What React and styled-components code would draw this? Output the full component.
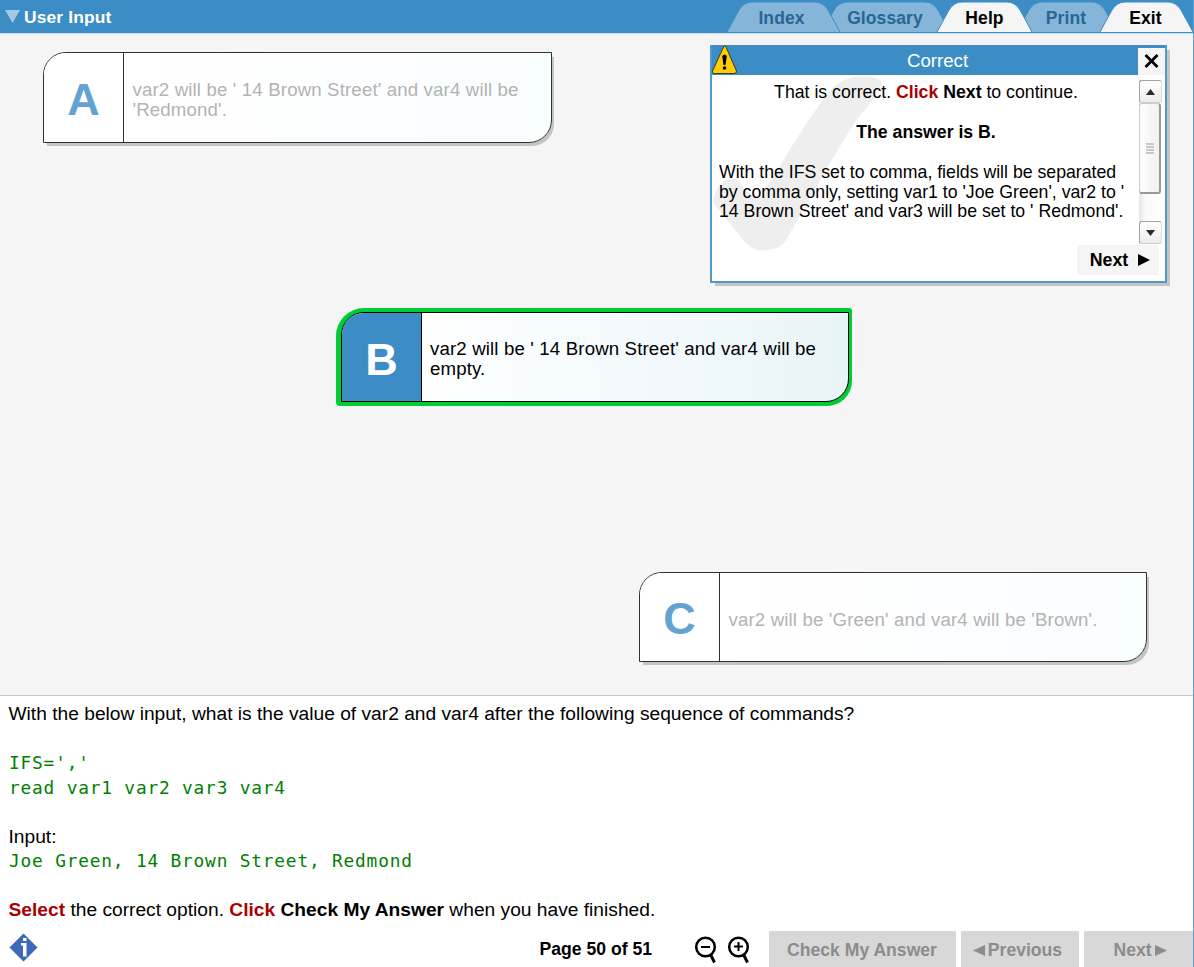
import React from "react";
import styled, { createGlobalStyle } from "styled-components";

const Global = createGlobalStyle`
  body { margin: 0; background: #fff; }
  *, *::before, *::after { box-sizing: border-box; }
  button { font: inherit; border: 0; padding: 0; cursor: pointer; }
`;

const App = styled.div`
  position: relative;
  width: 1194px;
  height: 967px;
  overflow: hidden;
  display: flex;
  flex-direction: column;
  border-right: 1px solid #5ba0d0;
  font-family: "Liberation Sans", Arial, sans-serif;
  font-size: 18.67px;
  color: #000;
  background: #fff;
`;

const Header = styled.header`
  flex: none;
  height: 34px;
  display: flex;
  align-items: flex-start;
  background: #3c8dc5;
  border-bottom: 1px solid #c5dff0;
`;

const Title = styled.h1`
  margin: 0 auto 0 0;
  padding: 0 0 0 5px;
  height: 34px;
  display: flex;
  align-items: center;
  gap: 4px;
  color: #fff;
  font-size: 17.4px;
  font-weight: bold;
  letter-spacing: 0.15px;

  svg { margin-bottom: 2px; }
`;

const Tabs = styled.nav`
  display: flex;
  padding-top: 2px;
`;

const TabButton = styled.button`
  position: relative;
  flex: none;
  width: ${(p) => p.$width}px;
  height: 30px;
  margin-left: ${(p) => p.$overlap}px;
  padding-top: 3px;
  z-index: ${(p) => p.$level};
  background: none;
  font-size: 17.5px;
  font-weight: bold;
  letter-spacing: 0.1px;
  color: ${(p) => (p.$active ? "#000" : "#2a6593")};

  svg { position: absolute; left: 0; top: 0; overflow: visible; }
  span { position: relative; left: ${(p) => p.$shift || 0}px; }
`;

const Board = styled.main`
  flex: none;
  height: 662px;
  padding-top: 18px;
  display: flex;
  flex-direction: column;
  align-items: flex-start;
  background: #f5f5f5;
  border-bottom: 1px solid #c6c6c6;
`;

const OptionFrame = styled.div`
  margin: ${(p) => p.$margin};
  padding: ${(p) => (p.$selected ? "4px 3px 4px 5px" : "0")};
  background: ${(p) => (p.$selected ? "#00cc33" : "transparent")};
  border-radius: ${(p) => (p.$selected ? "28px 3px 25px 4px" : "0")};
`;

const OptionCard = styled.div`
  width: ${(p) => p.$width || 508}px;
  height: ${(p) => p.$height || 90}px;
  display: flex;
  overflow: hidden;
  border: 1.5px solid ${(p) => (p.$selected ? "#000" : "#303030")};
  border-radius: 23px 0 23px 0;
  background: ${(p) =>
    p.$selected
      ? "linear-gradient(90deg, #fff 16%, #f7fcfe 40%, #e9f4f8)"
      : "linear-gradient(90deg, #fff 16%, #fdfeff 60%, #f8fdfe)"};
  box-shadow: ${(p) => (p.$selected ? "none" : "3px 4px 0 -1px #c4c4c4")};
`;

const Letter = styled.div`
  flex: none;
  width: 80px;
  display: flex;
  align-items: center;
  justify-content: center;
  padding-top: ${(p) => (p.$selected ? 5 : 4)}px;
  border-right: 1.5px solid ${(p) => (p.$selected ? "#000" : "#303030")};
  background: ${(p) => (p.$selected ? "#3c8dc5" : "#fff")};
  color: ${(p) => (p.$selected ? "#fff" : "#62a3d1")};
  font-size: 45px;
  font-weight: bold;
`;

const OptionText = styled.p`
  margin: 0;
  padding: ${(p) => (p.$selected ? "4px 10px 0 8px" : "5px 10px 0 8.5px")};
  align-self: center;
  line-height: 20px;
  letter-spacing: 0.14px;
  white-space: pre-line;
  color: ${(p) => (p.$selected ? "#000" : "#b3b3b3")};
`;

const Popup = styled.section`
  position: absolute;
  z-index: 5;
  left: 710px;
  top: 45px;
  width: 457px;
  height: 238px;
  display: flex;
  flex-direction: column;
  border: 2px solid #4f9acd;
  border-top: 0;
  background: #fff;
  box-shadow: 4px 4px 0 -1px #c4c4c4;
`;

const PopupHeader = styled.div`
  flex: none;
  height: 30px;
  display: flex;
  align-items: center;
  justify-content: space-between;
  padding-top: 2px;
  background: #3c8dc5;
  color: #fff;
`;

const WarningIcon = styled.svg`
  margin: -4px 0 0 0;
`;

const CloseButton = styled.button`
  width: 27px;
  height: 27px;
  display: grid;
  place-items: center;
  background: #f5f5f5;
`;

const PopupBody = styled.div`
  display: flex;
  height: 170px;
  padding: 5px 3px 0 7px;
`;

const Feedback = styled.div`
  position: relative;
  flex: 1;
  min-width: 0;
  padding: 3px 6px 0 0;
  font-size: 17.7px;
  line-height: 19.9px;
  white-space: pre;
`;

const Centered = styled.p`
  margin: 0 0 19.9px;
  text-align: center;
`;

const Paragraph = styled.p`
  margin: 0;
`;

const Watermark = styled.svg`
  position: absolute;
  left: 0;
  top: 30px;
  z-index: -1;
`;

const Scrollbar = styled.div`
  flex: none;
  width: 23px;
  height: 164px;
  display: flex;
  flex-direction: column;
  background: linear-gradient(90deg, #e6e6e6, #fafafa 30%, #fff);
`;

const ScrollArrow = styled.button`
  height: 23px;
  display: grid;
  place-items: center;
  border: 1.5px solid #a2a2a2;
  border-right-color: #ddd;
  border-bottom-color: #ccc;
  border-radius: 3px;
  background: linear-gradient(#fff, #ececec);
`;

const Thumb = styled.div`
  height: 91px;
  margin: 0 1px 27px 0;
  padding-top: 2px;
  display: grid;
  place-items: center;
  border: 1px solid #ccc;
  border-right: 2px solid #999;
  border-bottom: 2px solid #999;
  border-radius: 3px;
  background: linear-gradient(90deg, #fff, #f0f0f0);
`;

const NextButton = styled.button`
  align-self: flex-end;
  width: 82px;
  height: 30px;
  margin: 0 6px 0 0;
  padding-left: 4px;
  display: flex;
  align-items: center;
  justify-content: center;
  gap: 10px;
  background: #f5f5f5;
  font-size: 17.8px;
  font-weight: bold;
`;

const Red = styled.b`
  color: #a80000;
`;

const Question = styled.section`
  flex: none;
  height: 234px;
  padding: 6px 8.5px 0;
  font-size: 19.2px;
  line-height: 24.5px;
  white-space: pre;
`;

const Line = styled.p`
  margin: 0 0 ${(p) => (p.$gap ? "24.5px" : "0")};
`;

const Code = styled.code`
  display: block;
  margin-bottom: 24.5px;
  padding-left: 0.5px;
  font-family: "DejaVu Sans Mono", monospace;
  font-size: 17.8px;
  line-height: 24.5px;
  letter-spacing: 0.83px;
  color: #008000;
`;

const Footer = styled.footer`
  flex: 1;
  display: flex;
  align-items: flex-start;
  font-size: 17.6px;
  font-weight: bold;
`;

const InfoIcon = styled.svg`
  margin: 3px auto 0 9px;
`;

const PageCount = styled.div`
  padding-top: 9px;
  margin-right: 42px;
`;

const Zooms = styled.div`
  display: flex;
  gap: 9px;
  padding-top: 6px;
  margin-right: 18px;
`;

const Actions = styled.div`
  display: flex;
  gap: 5px;
  padding-top: 1px;
`;

const ActionButton = styled.button`
  width: ${(p) => p.$width}px;
  height: 38px;
  display: flex;
  align-items: center;
  justify-content: center;
  gap: 3px;
  padding-right: ${(p) => p.$trim || 0}px;
  padding-left: ${(p) => p.$indent || 0}px;
  background: #d8d8d8;
  color: #8c8c8c;
`;

function Tab({ label, width, overlap, level, active, shift }) {
  const w = width;
  const outline = `M0 30 L12 8 Q17 0 25 0 H${w - 25} Q${w - 17} 0 ${w - 12} 8 L${w} 30`;
  return (
    <TabButton $width={w} $overlap={overlap} $level={level} $active={active} $shift={shift}>
      <svg width={w} height="30">
        <path d={outline} fill={active ? "#f5f5f5" : "#85b5d9"} stroke="#3c8dc5" />
      </svg>
      <span>{label}</span>
    </TabButton>
  );
}

function Option({ letter, text, margin, selected, width, height }) {
  return (
    <OptionFrame $margin={margin} $selected={selected}>
      <OptionCard $selected={selected} $width={width} $height={height}>
        <Letter $selected={selected}>{letter}</Letter>
        <OptionText $selected={selected}>{text}</OptionText>
      </OptionCard>
    </OptionFrame>
  );
}

function Triangle({ dir, width, height, color }) {
  const points = {
    up: `0,${height} ${width / 2},0 ${width},${height}`,
    down: `0,0 ${width},0 ${width / 2},${height}`,
    left: `${width},0 ${width},${height} 0,${height / 2}`,
    right: `0,0 ${width},${height / 2} 0,${height}`,
  }[dir];
  return (
    <svg width={width} height={height}>
      <polygon points={points} fill={color} />
    </svg>
  );
}

function Magnifier({ plus }) {
  return (
    <svg width="24" height="28" viewBox="0 0 24 28" fill="none" stroke="#000">
      <circle cx="11.500" cy="11" r="9.300" strokeWidth="2.500" />
      <path d="M16.500 18.500 L20.500 26.500" strokeWidth="3" />
      <path d={plus ? "M7 10.500H16M11.500 6V15" : "M7 11H16"} strokeWidth="2" />
    </svg>
  );
}

export default function UserInput() {
  return (
    <App>
      <Global />
      <Header>
        <Title>
          <Triangle dir="down" width={15} height={13} color="#a3cae5" />
          User Input
        </Title>
        <Tabs>
          <Tab label="Index" width={113} overlap={0} level={2} shift={-2} />
          <Tab label="Glossary" width={128} overlap={-18} level={1} shift={-1} />
          <Tab label="Help" width={95} overlap={-13} level={3} active />
          <Tab label="Print" width={100} overlap={-15} level={1} shift={-1} />
          <Tab label="Exit" width={93} overlap={-17} level={3} active shift={-1} />
        </Tabs>
      </Header>

      <Board>
        <Option letter="A" width={509} height={91} margin="0 0 0 43px" text={"var2 will be ' 14 Brown Street' and var4 will be\n'Redmond'."} />
        <Option letter="B" margin="165px 0 0 336px" selected text={"var2 will be ' 14 Brown Street' and var4 will be\nempty."} />
        <Option letter="C" margin="166px 0 0 639px" text="var2 will be 'Green' and var4 will be 'Brown'." />
      </Board>

      <Popup>
        <Watermark width="180" height="206">
          <path
            d="M1 126 C4 111 12 102 22 104 C30 106 34 121 46 123 C54 118 78 70 108 29 C118 15 126 3 148 1.500 C158 1 171 3 169.500 9 C166 22 152 34 143 47 C122 80 94 130 77 160 C72 170 66 175 51 175.500 C42 176 37 171 33 167 L3 130 Z"
            fill="#eee"
          />
        </Watermark>
        <PopupHeader>
          <WarningIcon width="25" height="29" viewBox="0 0 25 29">
            <path d="M12 1 Q13 0 14 2 L24.500 26 Q25 28.500 22 28.500 H2 Q-.5 28 .5 26 Z" fill="#fc0" stroke="#3b3b20" />
            <path d="M10.200 11 Q12.500 8 14.800 11 L13.500 20 H11.500 Z" fill="#000" />
            <circle cx="12.500" cy="23" r="1.800" fill="#000" />
          </WarningIcon>
          Correct
          <CloseButton aria-label="Close">
            <svg width="15" height="14" viewBox="0 0 15 14" stroke="#000" strokeWidth="2.800">
              <path d="M1.500 1L13.500 13M13.500 1L1.500 13" />
            </svg>
          </CloseButton>
        </PopupHeader>
        <PopupBody>
          <Feedback>
            <Centered>That is correct. <Red>Click</Red> <b>Next</b> to continue.</Centered>
            <Centered><b>The answer is B.</b></Centered>
            <Paragraph>{"With the IFS set to comma, fields will be separated\nby comma only, setting var1 to 'Joe Green', var2 to '\n14 Brown Street' and var3 will be set to ' Redmond'."}</Paragraph>
          </Feedback>
          <Scrollbar>
            <ScrollArrow aria-label="Up"><Triangle dir="up" width={9} height={6} color="#222c38" /></ScrollArrow>
            <Thumb>
              <svg width="8" height="12" stroke="#b5b8ba" strokeWidth="1.500">
                <path d="M0 1H8M0 4H8M0 7H8M0 10H8" />
              </svg>
            </Thumb>
            <ScrollArrow aria-label="Down"><Triangle dir="down" width={9} height={6} color="#222c38" /></ScrollArrow>
          </Scrollbar>
        </PopupBody>
        <NextButton>Next <Triangle dir="right" width={12} height={12} color="#000" /></NextButton>
      </Popup>

      <Question>
        <Line $gap>With the below input, what is the value of var2 and var4 after the following sequence of commands?</Line>
        <Code>{"IFS=','\nread var1 var2 var3 var4"}</Code>
        <Line>Input:</Line>
        <Code>Joe Green, 14 Brown Street, Redmond</Code>
        <Line><Red>Select</Red> the correct option. <Red>Click</Red> <b>Check My Answer</b> when you have finished.</Line>
      </Question>

      <Footer>
        <InfoIcon width="29" height="29" viewBox="0 0 29 29">
          <path d="M14.500 .5L28.500 14.500L14.500 28.500L.5 14.500Z" fill="#3e68b8" />
          <path d="M14 5H17.500V8H14ZM12 10H17.500V23.500H14V12.500H12Z" fill="#fff" />
        </InfoIcon>
        <PageCount>Page 50 of 51</PageCount>
        <Zooms>
          <Magnifier />
          <Magnifier plus />
        </Zooms>
        <Actions>
          <ActionButton $width={187} $trim={1}>Check My Answer</ActionButton>
          <ActionButton $width={118} $trim={5}><Triangle dir="left" width={12} height={11} color="#8c8c8c" />Previous</ActionButton>
          <ActionButton $width={109} $indent={3}>Next<Triangle dir="right" width={12} height={11} color="#8c8c8c" /></ActionButton>
        </Actions>
      </Footer>
    </App>
  );
}
